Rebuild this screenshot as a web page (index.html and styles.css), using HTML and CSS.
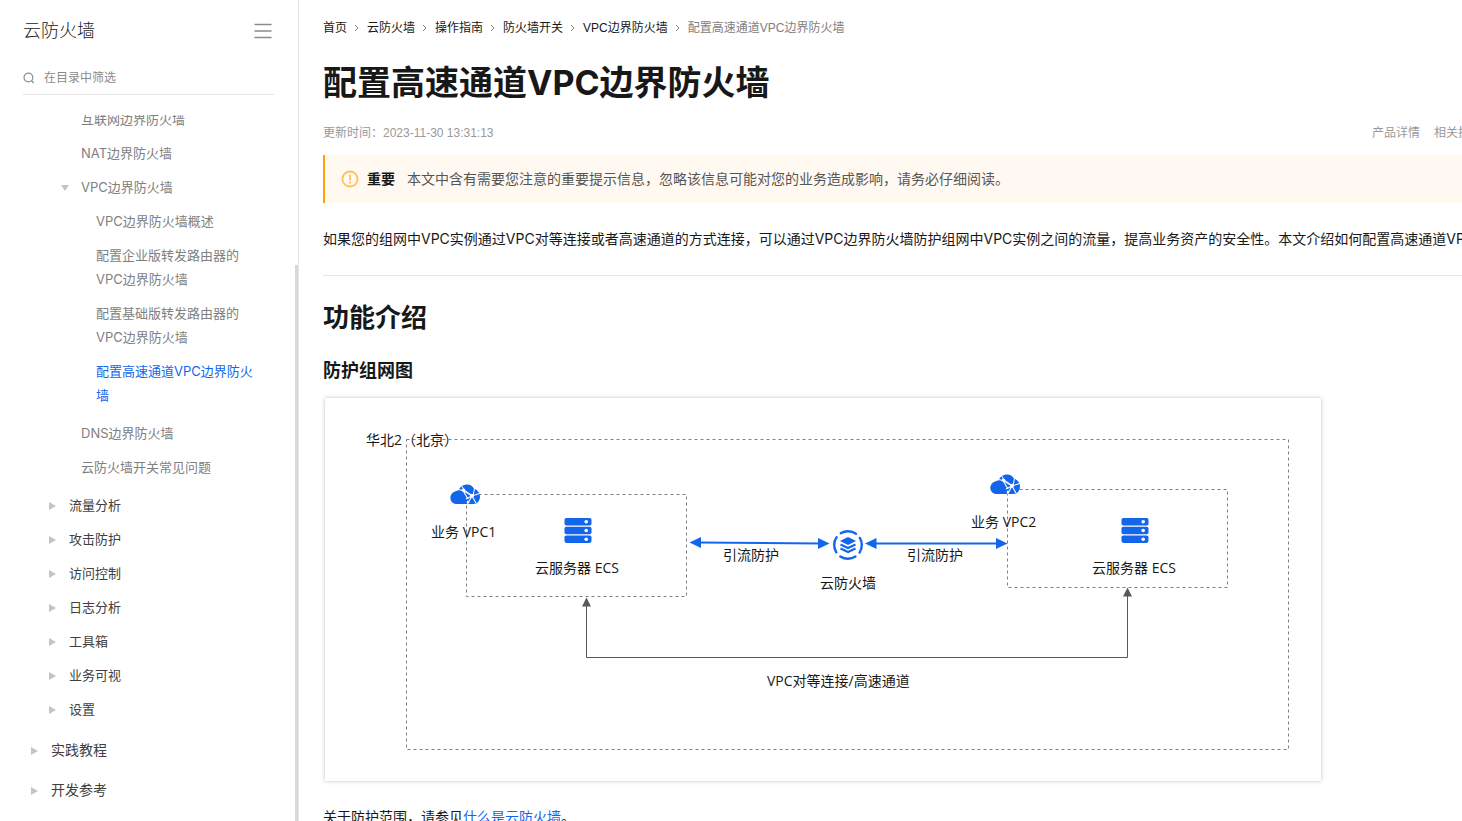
FILE: index.html
```html
<!DOCTYPE html>
<html lang="zh-CN">
<head>
<meta charset="utf-8">
<meta name="viewport" content="width=device-width, initial-scale=1">
<title>配置高速通道VPC边界防火墙</title>
<link rel="stylesheet" href="styles.css">
</head>
<body>
<div class="layout">
  <aside class="sidebar">
    <header class="sidebar-head">
      <span class="product">云防火墙</span>
      <button class="menu-button" type="button" aria-label="收起目录">
        <svg width="18" height="16" viewBox="0 0 18 16" aria-hidden="true"><path d="M1 1.500h16M1 8h16M1 14.500h16" fill="none" stroke="#8c8c8c" stroke-width="1.500" stroke-linecap="round"/></svg>
      </button>
    </header>
    <label class="search">
      <svg width="12" height="12" viewBox="0 0 12 12" aria-hidden="true"><path d="M8.500 8.500 10.600 11M9.800 5.500a4.400 4.400 0 1 1-8.800 0 4.400 4.400 0 0 1 8.800 0Z" fill="none" stroke="#8c8c8c" stroke-width="1.200"/></svg>
      <input class="search-input" type="text" placeholder="在目录中筛选" aria-label="在目录中筛选">
    </label>
    <nav class="toc" aria-label="目录">
      <ul class="toc-list">
        <li class="group group-3">
          <a class="item" href="#">互联网边界防火墙</a>
          <a class="item" href="#">NAT边界防火墙</a>
          <a class="item open" href="#">VPC边界防火墙</a>
        </li>
        <li class="group group-4">
          <a class="item" href="#">VPC边界防火墙概述</a>
          <a class="item" href="#">配置企业版转发路由器的<br>VPC边界防火墙</a>
          <a class="item" href="#">配置基础版转发路由器的<br>VPC边界防火墙</a>
          <a class="item current" href="#" aria-current="page">配置高速通道VPC边界防火<br>墙</a>
        </li>
        <li class="group group-3 spaced">
          <a class="item" href="#">DNS边界防火墙</a>
          <a class="item" href="#">云防火墙开关常见问题</a>
        </li>
        <li class="group group-2 spaced">
          <a class="item closed" href="#">流量分析</a>
          <a class="item closed" href="#">攻击防护</a>
          <a class="item closed" href="#">访问控制</a>
          <a class="item closed" href="#">日志分析</a>
          <a class="item closed" href="#">工具箱</a>
          <a class="item closed" href="#">业务可视</a>
          <a class="item closed" href="#">设置</a>
        </li>
        <li class="group group-1 spaced">
          <a class="item closed" href="#">实践教程</a>
          <a class="item closed" href="#">开发参考</a>
        </li>
      </ul>
    </nav>
    <div class="scroll-thumb"></div>
  </aside>

  <main class="main">
    <article class="article">
      <nav class="crumbs" aria-label="面包屑">
        <a href="#">首页</a>
        <svg class="chevron" viewBox="0 0 4 8" aria-hidden="true"><path d="m0 1 3 3-3 3"/></svg>
        <a href="#">云防火墙</a>
        <svg class="chevron" viewBox="0 0 4 8" aria-hidden="true"><path d="m0 1 3 3-3 3"/></svg>
        <a href="#">操作指南</a>
        <svg class="chevron" viewBox="0 0 4 8" aria-hidden="true"><path d="m0 1 3 3-3 3"/></svg>
        <a href="#">防火墙开关</a>
        <svg class="chevron" viewBox="0 0 4 8" aria-hidden="true"><path d="m0 1 3 3-3 3"/></svg>
        <a href="#">VPC边界防火墙</a>
        <svg class="chevron" viewBox="0 0 4 8" aria-hidden="true"><path d="m0 1 3 3-3 3"/></svg>
        <span class="crumb-current">配置高速通道VPC边界防火墙</span>
      </nav>
      <h1 class="title">配置高速通道VPC边界防火墙</h1>
      <div class="meta">
        <span>更新时间：2023-11-30 13:31:13</span>
        <span class="meta-links"><a href="#">产品详情</a><a href="#">相关技术圈</a></span>
      </div>
      <div class="notice">
        <svg class="notice-icon" width="18" height="18" viewBox="0 0 18 18" aria-hidden="true"><circle cx="9" cy="9" r="7.500" fill="none" stroke="#ffc15a" stroke-width="1.800"/><path d="M9 4.500v5.700M9 11.600v1.800" stroke="#ffc15a" stroke-width="1.800"/></svg>
        <strong class="notice-title">重要</strong>
        <span>本文中含有需要您注意的重要提示信息，忽略该信息可能对您的业务造成影响，请务必仔细阅读。</span>
      </div>
      <p class="intro">如果您的组网中VPC实例通过VPC对等连接或者高速通道的方式连接，可以通过VPC边界防火墙防护组网中VPC实例之间的流量，提高业务资产的安全性。本文介绍如何配置高速通道VPC边界防火墙。</p>
      <h2 class="section-title">功能介绍</h2>
      <h3 class="sub-title">防护组网图</h3>
      <figure class="figure">
        <svg class="diagram" viewBox="325 398 996 383" role="img" aria-label="防护组网图">
          <defs>
            <g id="cloud">
              <path d="M6.500 20A6.300 6.300 0 0 1 5 7.600 7 7 0 0 1 8.500 6.500C10 2.500 13.500.5 17 .5c3.200 0 5.600 1.500 7 4.200C27.500 5.500 30 9 30 12.500 30 17 27 20 23.500 20Z" fill="#1366ec"/>
              <path d="M8.500 5.500 13 6.500 22 12 29.500 9.500M13 6.500l5 8.500M22 12l-4.500 8M16 15l6-3 4 7" fill="none" stroke="#fff" stroke-width="1.100"/>
              <path d="M11.500 1.500 14 6 23 12 24.500 4.500" fill="none" stroke="#fff" stroke-width="1"/>
              <circle cx="13.500" cy="6.200" r="1.800" fill="#fff"/><circle cx="22" cy="11.800" r="2" fill="#fff"/><circle cx="18" cy="18" r="1.300" fill="#fff"/>
            </g>
            <g id="server">
              <rect width="27" height="7.500" rx="1.800" fill="#1366ec"/><rect y="8.700" width="27" height="7.500" rx="1.800" fill="#1366ec"/><rect y="17.400" width="27" height="7.500" rx="1.800" fill="#1366ec"/>
              <g fill="#fff"><circle cx="21.700" cy="3.800" r="1.800"/><circle cx="21.700" cy="12.500" r="1.800"/><circle cx="21.700" cy="21.200" r="1.800"/></g>
            </g>
          </defs>
          <g class="zone">
            <rect x="406.500" y="439.500" width="882" height="310"/>
            <rect x="466.500" y="494.500" width="220" height="102"/>
            <rect x="1007.500" y="489.500" width="220" height="98"/>
          </g>
          <use href="#cloud" x="450" y="484"/>
          <use href="#cloud" x="990" y="474"/>
          <use href="#server" x="564.500" y="518"/>
          <use href="#server" x="1121.500" y="518"/>
          <path d="M698 542.500 821 543.500M872 543.500h127" stroke="#1366ec" stroke-width="2"/>
          <path d="m689.500 542.500 11.500-5.500v11ZM829.500 543.500 818 538v11ZM865 543.500l11.500-5.500v11ZM1007.500 543.500 996 538v11Z" fill="#1366ec"/>
          <path d="M586.500 605v52.500h541V595" fill="none" stroke="#595959"/>
          <path d="m586.500 597.500 4.500 9h-9ZM1127.500 587.500l4.500 9h-9Z" fill="#595959"/>
          <g transform="translate(848 545)">
            <circle r="13.800" fill="none" stroke="#1366ec" stroke-width="2.400" stroke-dasharray="16 5.677" stroke-dashoffset="8" stroke-linecap="round"/>
            <path d="M0-8 8-4 0 0-8-4Z" fill="#1366ec"/>
            <path d="m-7.500-.5 7.500 3.500 7.500-3.500M-7.500 3.500 0 7l7.500-3.500" fill="none" stroke="#1366ec" stroke-width="2.200"/>
          </g>
          <g class="labels">
            <text x="366" y="445">华北2（北京）</text>
            <text x="431" y="537">业务 VPC1</text>
            <text x="971" y="527">业务 VPC2</text>
            <text x="535" y="573">云服务器 ECS</text>
            <text x="1092" y="573">云服务器 ECS</text>
            <text x="723" y="560">引流防护</text>
            <text x="907" y="560">引流防护</text>
            <text x="820" y="588">云防火墙</text>
            <text x="767" y="686">VPC对等连接/高速通道</text>
          </g>
        </svg>
      </figure>
      <p class="scope">关于防护范围，请参见<a href="#">什么是云防火墙</a>。</p>
    </article>
  </main>
</div>
</body>
</html>
```

FILE: styles.css
```css
* { box-sizing: border-box; }

body {
  margin: 0;
  overflow: hidden;
  background: #fff;
  color: #181818;
  font-family: "Liberation Sans", "Noto Sans CJK SC", sans-serif;
  font-size: 14px;
}

a { color: inherit; text-decoration: none; }

.layout { display: flex; height: 100vh; }

.sidebar {
  position: relative;
  display: flex;
  flex-direction: column;
  flex: 0 0 299px;
  padding: 15px 24px 0 23px;
  border-right: 1px solid #e5e5e5;
}

.sidebar-head {
  display: flex;
  align-items: center;
  justify-content: space-between;
  height: 28px;
}

.product { font-size: 18px; font-weight: 300; }

.menu-button {
  display: flex;
  margin: 4px 2px 0 0;
  padding: 0;
  border: 0;
  background: none;
}

.search {
  display: flex;
  align-items: center;
  gap: 9px;
  height: 34px;
  margin-top: 18px;
  border-bottom: 1px solid #e5e5e5;
}

.search-input {
  flex: 1;
  min-width: 0;
  padding: 0;
  border: 0;
  outline: 0;
  background: none;
  font-family: inherit;
  font-size: 12px;
}

.search-input::placeholder { color: #8c8c8c; }

.toc {
  flex: 1;
  min-height: 0;
  margin: 20px -24px 0 0;
  overflow: hidden;
  font-family: Inter, "Noto Sans CJK SC", sans-serif;
}

.toc-list { margin: -13px 0 0; padding: 0; list-style: none; }

.group { color: #808080; font-size: 13px; line-height: 24px; }

.item { position: relative; display: block; padding: 5px 0; }

.group-1 { padding-left: 28px; color: #404040; font-size: 14px; }
.group-2 { padding-left: 46px; color: #404040; }
.group-3 { padding-left: 58px; }
.group-4 { padding-left: 73px; }
.spaced { padding-top: 4px; }
.group-1 .item { padding: 8px 0; }

.current { color: #1366ec; }

.open::before,
.closed::before {
  content: "";
  position: absolute;
  top: 50%;
  left: -20px;
  border: solid transparent;
}

.open::before { margin-top: -2px; border-width: 6px 4px 0; border-top-color: #c4c4c4; }
.closed::before { margin-top: -3px; border-width: 4px 0 4px 7px; border-left-color: #c4c4c4; }

.scroll-thumb {
  position: absolute;
  top: 265px;
  right: 0;
  bottom: 0;
  width: 3px;
  background: #d8d8d8;
}

.main { flex: 1; min-width: 0; padding: 19px 0 0 24px; overflow: hidden; }

.article { min-width: 1171px; }

.crumbs {
  display: flex;
  align-items: center;
  gap: 8px;
  font-size: 12px;
  line-height: 18px;
}

.crumb-current { color: #808080; }

.chevron {
  width: 4px;
  height: 8px;
  fill: none;
  stroke: #808080;
}

.title {
  margin: 22px 0 0;
  font-family: Inter, "Noto Sans CJK SC", sans-serif;
  font-size: 34px;
  line-height: 48px;
}

.meta {
  display: flex;
  justify-content: space-between;
  margin-top: 16px;
  color: #999;
  font-size: 12px;
  line-height: 20px;
}

.meta-links { display: flex; gap: 14px; }

.notice {
  display: flex;
  align-items: center;
  height: 48px;
  margin-top: 12px;
  padding-left: 16px;
  border-left: 2px solid #ffa003;
  background: #fff9f2;
  color: #555;
  line-height: 22px;
}

.notice-title { margin: 0 12px 0 8px; color: #181818; }

.intro {
  margin: 24px 0 0;
  padding-bottom: 24px;
  border-bottom: 1px solid #e5e5e5;
  font-family: Inter, "Noto Sans CJK SC", sans-serif;
  line-height: 24px;
  white-space: nowrap;
}

.section-title { margin: 24px 0 0; font-size: 26px; line-height: 36px; }

.sub-title { margin: 22px 0 0; font-size: 18px; line-height: 26px; }

.figure {
  max-width: 996px;
  margin: 14px 2px 0;
  box-shadow: 0 0 4px rgba(0, 0, 0, 0.25);
}

.diagram { display: block; width: 100%; }

.zone {
  fill: none;
  stroke: #808080;
  stroke-dasharray: 3 3;
}

.labels {
  fill: #181818;
  font-family: "Open Sans", "Noto Sans CJK SC", sans-serif;
  font-size: 14px;
}

.scope { margin: 24px 0 0; line-height: 24px; }
.scope a { color: #1366ec; }
```
